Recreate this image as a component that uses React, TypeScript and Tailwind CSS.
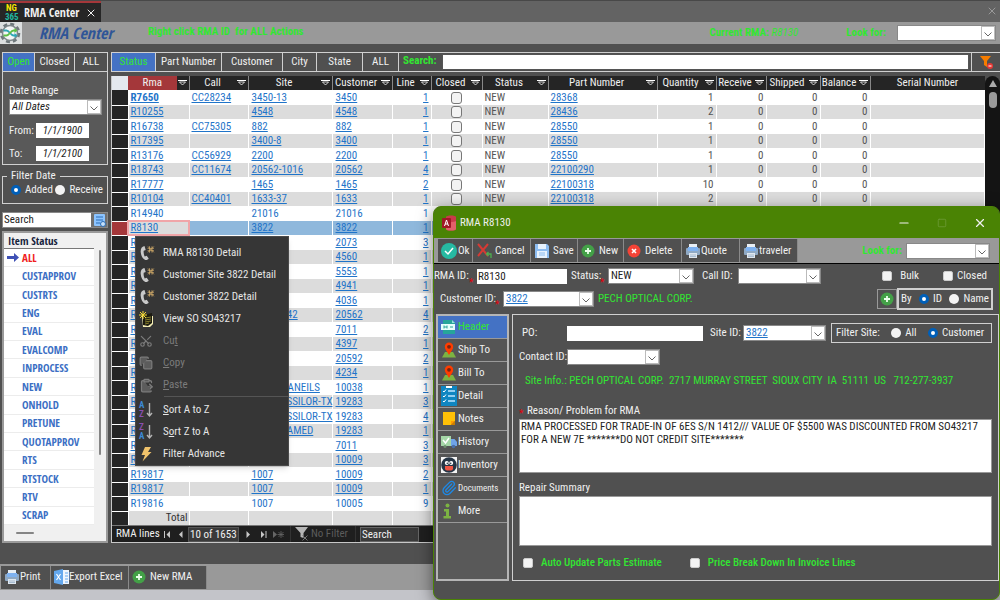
import { useState, type ReactNode } from 'react';
import { Scissors, Copy, ClipboardPaste, Paperclip, X, Minus, Square } from 'lucide-react';

type Row = { rma: string; call?: string; site?: string; customer: string; line: number; part?: string; qty?: number; plain?: boolean };

const rows: Row[] = [
    { rma: 'R7650', call: 'CC28234', site: '3450-13', customer: '3450', line: 1, part: '28368', qty: 1 },
    { rma: 'R10255', site: '4548', customer: '4548', line: 1, part: '28436', qty: 2 },
    { rma: 'R16738', call: 'CC75305', site: '882', customer: '882', line: 1, part: '28550', qty: 1 },
    { rma: 'R17395', site: '3400-8', customer: '3400', line: 1, part: '28550', qty: 1 },
    { rma: 'R13176', call: 'CC56929', site: '2200', customer: '2200', line: 1, part: '28550', qty: 1 },
    { rma: 'R18743', call: 'CC11674', site: '20562-1016', customer: '20562', line: 4, part: '22100290', qty: 1 },
    { rma: 'R17777', site: '1465', customer: '1465', line: 2, part: '22100318', qty: 10 },
    { rma: 'R10104', call: 'CC40401', site: '1633-37', customer: '1633', line: 1, part: '22100318', qty: 2 },
    { rma: 'R14940', site: '21016', customer: '21016', line: 1, plain: true },
    { rma: 'R8130', site: '3822', customer: '3822', line: 1 },
    { rma: 'R', customer: '2073', line: 3 },
    { rma: 'R', customer: '4560', line: 1 },
    { rma: 'R', customer: '5553', line: 1 },
    { rma: 'R', customer: '4941', line: 1 },
    { rma: 'R', customer: '4036', line: 1 },
    { rma: 'R', site: '20562-142', customer: '20562', line: 4 },
    { rma: 'R', customer: '7011', line: 2 },
    { rma: 'R', customer: '4397', line: 1 },
    { rma: 'R', customer: '20592', line: 2 },
    { rma: 'R', customer: '4234', line: 1 },
    { rma: 'R', site: '10038-DANEILS', customer: '10038', line: 1 },
    { rma: 'R', site: '1007 - ESSILOR-TX', customer: '19283', line: 3 },
    { rma: 'R', site: '1007 - ESSILOR-TX', customer: '19283', line: 4 },
    { rma: 'R', site: '1007 FRAMED', customer: '19283', line: 1 },
    { rma: 'R', customer: '7011', line: 3 },
    { rma: 'R', customer: '10009', line: 3 },
    { rma: 'R19817', site: '1007', customer: '10009', line: 2 },
    { rma: 'R19817', site: '1007', customer: '10009', line: 1 },
    { rma: 'R19816', site: '1007', customer: '10005', line: 9, plain: true },
];

const columns = [
    { name: 'Rma', width: 'w-[61px]' },
    { name: 'Call', width: 'w-[59px]' },
    { name: 'Site', width: 'w-[84px]' },
    { name: 'Customer', width: 'w-[60px]' },
    { name: 'Line', width: 'w-[39px]' },
    { name: 'Closed', width: 'w-[51px]' },
    { name: 'Status', width: 'w-[66px]' },
    { name: 'Part Number', width: 'w-[109px]' },
    { name: 'Quantity', width: 'w-[59px]' },
    { name: 'Receive', width: 'w-[50px]' },
    { name: 'Shipped', width: 'w-[54px]' },
    { name: 'Balance', width: 'w-[50px]' },
];

const statuses = ['ALL', 'CUSTAPPROV', 'CUSTRTS', 'ENG', 'EVAL', 'EVALCOMP', 'INPROCESS', 'NEW', 'ONHOLD', 'PRETUNE', 'QUOTAPPROV', 'RTS', 'RTSTOCK', 'RTV', 'SCRAP'];

/* ---------- icons ---------- */

function PrinterIcon() {
    return (
        <svg className="size-4 shrink-0" viewBox="0 0 16 16">
            <rect x="4" y="1" width="8" height="5" fill="#e8eef4" />
            <rect x="1" y="5" width="14" height="7" rx="1" fill="#8fa9c4" />
            <rect x="3" y="4" width="10" height="4" fill="#7fb2f0" />
            <rect x="4" y="10" width="8" height="5" fill="#dfe7ef" />
            <path d="M5 12h6M5 13.5h6" stroke="#8fa9c4" strokeWidth=".7" />
        </svg>
    );
}

function PlusIcon() {
    return (
        <svg className="size-[14px] shrink-0" viewBox="0 0 14 14">
            <circle cx="7" cy="7" r="6.5" fill="#43a047" />
            <path d="M7 4v6M4 7h6" stroke="#eaffea" strokeWidth="1.8" />
        </svg>
    );
}

function PinIcon() {
    return (
        <svg className="size-4 shrink-0" viewBox="0 0 16 16">
            <path d="M4 10h8l3 5.5H1z" fill="#7cb342" />
            <path d="M8 13C6 9.500 3.800 7.500 3.800 4.800a4.200 4.200 0 0 1 8.400 0C12.200 7.500 10 9.500 8 13z" fill="#ff3d00" />
            <circle cx="8" cy="4.800" r="1.900" fill="#7b2410" />
        </svg>
    );
}

function FilterArrow() {
    return (
        <svg className="w-[9px] h-[6px] shrink-0" viewBox="0 0 9 6">
            <path d="M0 .5h9" stroke="#fff" />
            <path d="M1.500 2h6L4.500 5z" fill="#1c1c1c" stroke="#fff" strokeWidth=".8" />
        </svg>
    );
}

function GearLogo() {
    return (
        <svg className="w-[22px] h-[22px] shrink-0 bg-[#dcdfe0]" viewBox="0 0 22 22">
            <circle cx="10" cy="11" r="8.800" fill="none" stroke="#6f787c" strokeWidth="3" strokeDasharray="3.900 3" />
            <circle cx="10" cy="11" r="7.500" fill="#f4f6f6" stroke="#7d868a" strokeWidth="1.500" />
            <path d="M3.500 8.500h3c3 0 4 5 7 5h2" fill="none" stroke="#2fa7b5" strokeWidth="1.800" />
            <path d="M3.500 13.500h3c3 0 4-5 7-5h2" fill="none" stroke="#5fbf45" strokeWidth="1.800" />
            <path d="M14.500 6l3 2.500-3 2.500z" fill="#5fbf45" />
            <path d="M14.500 11l3 2.500-3 2.500z" fill="#2fa7b5" />
        </svg>
    );
}

function PhoneIcon() {
    return (
        <svg className="size-4" viewBox="0 0 16 16">
            <path d="M5.500 1C2.500 1.500 1.500 4 1.700 7c.3 3.800 2 7 4.600 8 1.400.4 2.700-.2 3.400-1.400L7.700 10.700l-2 .7C4.700 9.600 4.500 7.500 4.700 5.700l2-.6z" fill="#c9c9c9" />
            <path d="M8.500 3.300h6.500M8.500 5.700h6.500M10.500 1.200v6.500M13 1.200v6.500M9 1.500l5.800 5.800M14.800 1.500L9 7.300" stroke="#d9b06c" strokeWidth=".7" />
        </svg>
    );
}

function OrderIcon() {
    return (
        <svg className="size-4" viewBox="0 0 16 16">
            <path d="M3 5h11v8l-3 3H4z" fill="#f5efb5" />
            <path d="M4 4l9-2v10l-4 3-5-1z" fill="#1b1a10" />
            <path d="M6 7l6-1M6 9l6-1M6 11l6-1M6 13l4-1" stroke="#a59a33" strokeWidth=".8" />
            <path d="M4 0v8M0 4h8M1 1l6 6M7 1L1 7" stroke="#f4d936" strokeWidth="1" />
        </svg>
    );
}

function SortIcon({ reverse }: { reverse?: boolean }) {
    return (
        <span className="flex items-center text-[9px] leading-[9px] font-bold">
            <span className="flex flex-col w-[7px]">
                <span className={reverse ? 'text-[#8b4fb0]' : 'text-[#3c8ad6]'}>{reverse ? 'Z' : 'A'}</span>
                <span className={reverse ? 'text-[#3c8ad6]' : 'text-[#8b4fb0]'}>{reverse ? 'A' : 'Z'}</span>
            </span>
            <svg className="w-[7px] h-[15px]" viewBox="0 0 7 15">
                <path d="M3.500 0v13M1 10l2.500 3L6 10" fill="none" stroke="#b5b5b5" strokeWidth="1.400" />
            </svg>
        </span>
    );
}

function BoltIcon() {
    return (
        <svg className="size-4" viewBox="0 0 16 16">
            <path d="M6 1h6L9 6h3.500L3.500 15.500 6 9H2.500z" fill="#f0c36b" />
        </svg>
    );
}

/* ---------- form parts ---------- */

function Drop({ id, value, options, className, link }: { id: string; value?: string; options?: string[]; className: string; link?: boolean }) {
    return (
        <div className={`grid h-4 border border-[#888] bg-white ${className}`}>
            <select
                id={id}
                defaultValue={value}
                className={`[grid-area:1/1] appearance-none w-full min-w-0 bg-white pl-[2px] pr-4 leading-[14px] outline-none ${link ? 'text-[#1f74c9] underline' : 'text-[#222]'}`}
            >
                {(options ?? [value ?? '']).map((o) => (
                    <option key={o} value={o}>{o}</option>
                ))}
            </select>
            <span className="[grid-area:1/1] justify-self-end pointer-events-none w-[14px] bg-white border border-[#bbb] flex items-center justify-center">
                <svg className="w-2 h-[5px] mt-[3px]" viewBox="0 0 8 5">
                    <path d="M.5.500L4 4 7.500.500" fill="none" stroke="#666" />
                </svg>
            </span>
        </div>
    );
}

function Radio({ name, label, checked }: { name: string; label: string; checked?: boolean }) {
    return (
        <label className="flex items-center gap-1 whitespace-nowrap">
            <input
                type="radio"
                name={name}
                defaultChecked={checked}
                className="appearance-none size-[10px] shrink-0 rounded-full bg-[#f3f3f3] checked:border-[3px] checked:border-[#005fb8] checked:bg-white"
            />
            {label}
        </label>
    );
}

function Check({ label, className }: { label: string; className: string }) {
    return (
        <label className={`flex items-center whitespace-nowrap ${className}`}>
            <input type="checkbox" className="appearance-none size-[10px] shrink-0 rounded-[2px] bg-[#f3f3f3] border border-[#ccc] checked:bg-[#005fb8]" />
            {label}
        </label>
    );
}

function Required() {
    return <span className="w-2 shrink-0 self-end text-red-600 text-[10px] leading-[10px]">*</span>;
}

function ToolButton({ icon, children, className = '' }: { icon: ReactNode; children: ReactNode; className?: string }) {
    return (
        <button className={`h-[23px] flex items-center border-r border-[#8a8a8a] bg-[#505050] px-[3px] whitespace-nowrap ${className}`}>
            {icon}
            {children}
        </button>
    );
}

/* ---------- left side ---------- */

function Sidebar() {
    const [active, setActive] = useState('ALL');
    const [tab, setTab] = useState('Open');

    return (
        <aside className="w-[108px] shrink-0 flex flex-col pl-[2px]">
            <section className="border border-[#d0d0d0] bg-[#595959] h-[113px]">
                <div className="flex h-[19px] border-b border-[#d0d0d0]">
                    {['Open', 'Closed', 'ALL'].map((t) => (
                        <button
                            key={t}
                            onClick={() => setTab(t)}
                            className={`border-r border-[#d0d0d0] last:border-r-0 ${t === 'Closed' ? 'w-10' : 'w-[33px]'} ${tab === t ? 'bg-[#4472c4] text-[#32e632]' : 'bg-[#505050]'}`}
                        >
                            {t}
                        </button>
                    ))}
                </div>
                <div className="pl-[6px] pt-3">
                    <label htmlFor="range" className="block leading-[14px]">Date Range</label>
                    <Drop id="range" value="All Dates" options={['All Dates', 'This Month', 'This Year']} className="w-[93px] italic mt-[1px]" />
                    <div className="flex items-center mt-2">
                        <label htmlFor="from" className="w-[27px]">From:</label>
                        <input id="from" defaultValue="1/1/1900" className="w-[53px] h-[15px] bg-white text-[#222] italic text-center" />
                    </div>
                    <div className="flex items-center mt-2">
                        <label htmlFor="to" className="w-[27px]">To:</label>
                        <input id="to" defaultValue="1/1/2100" className="w-[53px] h-[15px] bg-white text-[#222] italic text-center" />
                    </div>
                </div>
            </section>

            <fieldset className="mt-1 h-[35px] border border-[#d0d0d0] px-2 pb-[6px]">
                <legend className="px-1 leading-[14px] -ml-1">Filter Date</legend>
                <div className="flex justify-between -mr-1">
                    <Radio name="filterdate" label="Added" checked />
                    <Radio name="filterdate" label="Receive" />
                </div>
            </fieldset>

            <div className="mt-2 flex h-4 border border-[#888]">
                <input aria-label="Search status" defaultValue="Search" className="min-w-0 flex-1 bg-white text-[#222] px-[1px]" />
                <button aria-label="Find" className="w-4 bg-[#707070] flex items-center justify-center">
                    <svg className="size-[13px]" viewBox="0 0 13 13">
                        <rect x="1" y="0" width="11" height="12" rx="1" fill="#8cc4ff" />
                        <path d="M3 3h7M3 6h7M3 9h4" stroke="#2b6cb5" />
                        <circle cx="10" cy="10" r="2.500" fill="#c5e0fa" stroke="#2b6cb5" />
                    </svg>
                </button>
            </div>

            <section className="mt-[3px] flex-1 border-2 border-[#9a9a9a] bg-[#f0f0f0] flex flex-col">
                <h2 className="mr-3 h-4 pl-1 font-['Open_Sans_Condensed','Open_Sans',sans-serif] font-bold leading-[16px] text-[#16233c] border-b border-[#777]">Item Status</h2>
                <div className="flex h-[276px]">
                    <ul className="flex-1 flex flex-col bg-white font-['Open_Sans_Condensed','Open_Sans',sans-serif] font-bold">
                        {statuses.map((s) => (
                            <li key={s} className="flex-1 border-b border-[#ececec] flex">
                                <button onClick={() => setActive(s)} className={`flex flex-1 items-center ${active === s ? 'text-[#f02020]' : 'text-[#3c6fc4]'}`}>
                                    <span className="w-[18px] pl-[3px]">
                                        {active === s && (
                                            <svg className="w-3 h-[9px]" viewBox="0 0 12 9">
                                                <path d="M0 3h7V0l5 4.500L7 9V6H0z" fill="#3f51b5" />
                                            </svg>
                                        )}
                                    </span>
                                    {s}
                                </button>
                            </li>
                        ))}
                    </ul>
                    <div className="w-3 flex justify-center pt-[1px]">
                        <div className="w-[2px] h-[205px] rounded bg-[#858585]" />
                    </div>
                </div>
                <div className="flex-1 flex items-center pl-3">
                    <div className="w-[18px] h-[2px] rounded bg-[#858585]" />
                </div>
            </section>
        </aside>
    );
}

/* ---------- grid ---------- */

function Link({ children, plain }: { children: ReactNode; plain?: boolean }) {
    return <a href="#" className={`text-[#1f74c9] ${plain ? '' : 'underline'}`}>{children}</a>;
}

function Grid() {
    return (
        <div className="flex flex-1">
            <table className="table-fixed flex-1 w-full border-collapse whitespace-nowrap self-start">
                <colgroup>
                    <col className="w-4" />
                    {columns.map((c) => <col key={c.name} className={c.width} />)}
                    <col />
                </colgroup>
                <thead>
                    <tr className="h-[14px] bg-[#252525] leading-[14px]">
                        <th className="bg-[#e4e8ee] p-0" />
                        {columns.map((c) => (
                            <th key={c.name} className="p-0 font-normal border-r border-[#888]">
                                <span className="flex items-center">
                                    <span className={`flex-1 ${c.name === 'Rma' ? 'bg-[#a4373a]' : ''}`}>{c.name}</span>
                                    <span className="w-3 flex justify-center"><FilterArrow /></span>
                                </span>
                            </th>
                        ))}
                        <th className="p-0 font-normal">Serial Number</th>
                    </tr>
                </thead>
                <tbody className="leading-[14px]">
                    {rows.map((r, i) => {
                        const current = r.rma === 'R8130';
                        return (
                            <tr key={i} className={`h-[14px] odd:h-[15px] [&>td]:p-0 [&>td]:border-r [&>td]:border-white ${current ? 'bg-[#8fb8dc]' : i % 2 ? 'bg-[#dcdcdc]' : 'bg-white'}`}>
                                <td className={`border-b border-b-[#aaa] ${current ? 'bg-[#a4373a]' : 'bg-[#252525]'}`} />
                                <td className={current ? 'bg-[#dcdcdc] outline outline-2 -outline-offset-1 outline-[#f0a5a8]' : ''}>
                                    <span className="pl-[2px]"><Link plain={r.plain}>{i === 0 ? <b>{r.rma}</b> : r.rma}</Link></span>
                                </td>
                                <td><span className="pl-[2px]">{r.call && <Link>{r.call}</Link>}</span></td>
                                <td><span className="pl-[3px]">{r.site && <Link plain={r.plain}>{r.site}</Link>}</span></td>
                                <td><span className="pl-[3px]"><Link plain={r.plain}>{r.customer}</Link></span></td>
                                <td className="text-right"><span className="pr-[2px]"><Link plain={r.plain}>{r.line}</Link></span></td>
                                <td>
                                    {r.part && <input type="checkbox" aria-label={`Closed ${r.rma}`} className="appearance-none block mx-auto w-[11px] h-3 rounded-[3px] border border-[#777] bg-[#f3f3f3]" />}
                                </td>
                                <td className="text-[#555]"><span className="pl-[2px]">{r.part && 'NEW'}</span></td>
                                <td><span className="pl-[2px]">{r.part && <Link>{r.part}</Link>}</span></td>
                                <td className="text-right text-[#555]"><span className="pr-[2px]">{r.qty}</span></td>
                                <td className="text-right text-[#555]"><span className="pr-[2px]">{r.part && 0}</span></td>
                                <td className="text-right text-[#555]"><span className="pr-[2px]">{r.part && 0}</span></td>
                                <td className="text-right text-[#555]"><span className="pr-[2px]">{r.part && 0}</span></td>
                                <td />
                            </tr>
                        );
                    })}
                    <tr className="h-[14px] bg-[#dcdcdc] text-[#333] [&>td]:p-0 [&>td]:border-r [&>td]:border-white">
                        <td className="bg-[#252525]" />
                        <td className="text-right"><span className="pr-[1px]">Total</span></td>
                        {columns.map((c) => <td key={c.name} />)}
                    </tr>
                </tbody>
            </table>
            <div className="w-[15px] shrink-0 bg-[#141414] rounded-t-lg flex flex-col items-center pt-1">
                <svg className="w-2 h-2" viewBox="0 0 8 8"><path d="M4 0l4 7H0z" fill="#aaa" /></svg>
                <div className="mt-1 w-2 h-4 rounded-full bg-[#9a9a9a]" />
            </div>
        </div>
    );
}

function NavBar() {
    const arrow = 'h-[9px] w-[9px] fill-[#c8c8c8]';
    return (
        <div className="h-[17px] bg-[#1f1f1f] flex items-center border-t border-[#777] pl-1 whitespace-nowrap">
            <span className="w-[43px]">RMA lines</span>
            <button aria-label="First" className="w-4 flex justify-center"><svg className={arrow} viewBox="0 0 9 9"><path d="M1 1h1v7H1zM7 1v7L3.500 4.500z" /></svg></button>
            <button aria-label="Previous" className="w-[11px] flex justify-center"><svg className={arrow} viewBox="0 0 9 9"><path d="M6.500 1v7L3 4.500z" /></svg></button>
            <input aria-label="Record" defaultValue="10 of 1653" className="w-[51px] h-[15px] ml-[2px] px-[1px] bg-[#3a3a3a] border border-[#555]" />
            <button aria-label="Next" className="w-[18px] flex justify-center"><svg className={arrow} viewBox="0 0 9 9"><path d="M2.500 1v7L6 4.500z" /></svg></button>
            <button aria-label="Last" className="w-[13px] flex justify-center"><svg className={arrow} viewBox="0 0 9 9"><path d="M6.500 1h1v7h-1zM2 1v7l3.500-3.500z" /></svg></button>
            <button aria-label="New record" className="w-4 flex justify-center">
                <svg className="h-[9px] w-[11px] fill-[#666]" viewBox="0 0 11 9"><path d="M0 1v7l4-3.500z" /><path d="M8 1v7M4.500 4.500h6.500M5.500 2l5 5M10.500 2l-5 5" stroke="#666" strokeWidth=".8" /></svg>
            </button>
            <button className="ml-1 w-[66px] flex items-center gap-[2px] text-[#5c5c5c] border-l border-r border-[#333] pl-1 h-full">
                <svg className="size-[14px]" viewBox="0 0 14 14"><path d="M0 0h13L8.500 6v5l-3-1V6z" fill="#b5b5b5" /><path d="M7.500 8.500l5 5M12.500 8.500l-5 5" stroke="#777" /></svg>
                No Filter
            </button>
            <input aria-label="Search records" defaultValue="Search" className="ml-1 w-[59px] h-[15px] px-[1px] bg-[#3a3a3a] border border-[#666]" />
        </div>
    );
}

/* ---------- context menu ---------- */

function Item({ icon, children, disabled }: { icon: ReactNode; children: ReactNode; disabled?: boolean }) {
    return (
        <button role="menuitem" disabled={disabled} className={`h-[22px] w-full flex items-center text-left whitespace-nowrap ${disabled ? 'text-[#7c7c7c]' : 'text-[#e6e6e6]'}`}>
            <span className="w-[27px] pl-[3px] flex shrink-0">{icon}</span>
            <span>{children}</span>
        </button>
    );
}

function ContextMenu() {
    return (
        <div role="menu" className="absolute left-[135px] top-[236px] w-[154px] bg-[#363636] border border-[#4a4a4a] pt-[5px] shadow-md">
            <Item icon={<PhoneIcon />}>RMA R8130 Detail</Item>
            <Item icon={<PhoneIcon />}>Customer Site 3822 Detail</Item>
            <Item icon={<PhoneIcon />}>Customer 3822 Detail</Item>
            <Item icon={<OrderIcon />}>View SO SO43217</Item>
            <Item disabled icon={<Scissors className="size-[14px] -rotate-90" strokeWidth={2} />}>Cu<u>t</u></Item>
            <Item disabled icon={<Copy className="size-[14px]" strokeWidth={2} fill="#5c5c5c" />}><u>C</u>opy</Item>
            <Item disabled icon={<ClipboardPaste className="size-[15px]" strokeWidth={2} fill="#5c5c5c" />}><u>P</u>aste</Item>
            <div className="ml-7 mb-[2px] border-t border-[#555]" />
            <Item icon={<SortIcon />}><u>S</u>ort A to Z</Item>
            <Item icon={<SortIcon reverse />}>S<u>o</u>rt Z to A</Item>
            <Item icon={<BoltIcon />}>Filter Advance</Item>
        </div>
    );
}

/* ---------- RMA window ---------- */

const sections: { name: string; icon: ReactNode }[] = [
    {
        name: 'Header',
        icon: (
            <svg className="size-4 shrink-0" viewBox="0 0 16 16">
                <path d="M2 1h9l3 3v11H2z" fill="#26a69a" />
                <path d="M11 1l3 3h-3z" fill="#8fe0d6" />
                <rect x="0" y="5" width="14" height="6" fill="#e6fffb" />
                <path d="M3 6.500v3M6 6.500v3M3 8h3M9 8h3" stroke="#26a69a" />
            </svg>
        ),
    },
    { name: 'Ship To', icon: <PinIcon /> },
    { name: 'Bill To', icon: <PinIcon /> },
    {
        name: 'Detail',
        icon: (
            <svg className="w-4 h-5 shrink-0" viewBox="0 0 16 20">
                <rect width="16" height="20" fill="#0f86c1" />
                <rect x="5" width="6" height="2" fill="#fff" />
                <path d="M7 5h7M7 10h7M7 15h7" stroke="#bfe6ff" strokeWidth="1.600" />
                <path d="M2 5l1 1 2-2.500M2 10l1 1 2-2.500M2 15l1 1 2-2.500" fill="none" stroke="#fff" />
            </svg>
        ),
    },
    {
        name: 'Notes',
        icon: (
            <svg className="size-4 shrink-0" viewBox="0 0 16 16">
                <path d="M2 1h12v9l-4 4H2z" fill="#ffc107" />
                <path d="M14 10l-4 4v-4z" fill="#ff9800" />
                <path d="M10 14l4-4v4z" fill="#c97d00" />
            </svg>
        ),
    },
    {
        name: 'History',
        icon: (
            <svg className="size-4 shrink-0" viewBox="0 0 16 16">
                <rect x="0" y="2" width="10" height="10" fill="#a5d6a7" />
                <path d="M2 6l2.500 3L8 4" fill="none" stroke="#fff" strokeWidth="1.500" />
                <path d="M10 5h3.500L16 8v4h-6z" fill="#6fa4e8" />
                <circle cx="12.500" cy="12.500" r="1.800" fill="#4a6fa5" />
                <circle cx="4" cy="12.500" r="1.500" fill="#6d8c6e" />
            </svg>
        ),
    },
    {
        name: 'Inventory',
        icon: (
            <svg className="size-4 shrink-0" viewBox="0 0 16 16">
                <rect width="16" height="16" fill="#f4f4f4" />
                <circle cx="8" cy="8" r="7.800" fill="#263545" />
                <circle cx="5.800" cy="6" r="2" fill="#fff" />
                <circle cx="10.200" cy="6" r="2" fill="#fff" />
                <circle cx="6.300" cy="6.200" r=".8" fill="#263545" />
                <circle cx="9.700" cy="6.200" r=".8" fill="#263545" />
                <path d="M4 9h8v2.500a2 2 0 0 1-2 2H6a2 2 0 0 1-2-2z" fill="#ee5544" />
            </svg>
        ),
    },
    { name: 'Documents', icon: <Paperclip className="size-4 shrink-0 text-[#1e88e5]" strokeWidth={2} /> },
    {
        name: 'More',
        icon: (
            <svg className="size-4 shrink-0" viewBox="0 0 16 16">
                <circle cx="6.500" cy="2.500" r="2" fill="#7cb342" />
                <path d="M3 6h5v7h2v2.500H2.500V13H5V8.500H3z" fill="#7cb342" />
            </svg>
        ),
    },
];

function RmaWindow() {
    const [section, setSection] = useState('Header');
    const [reason, setReason] = useState('RMA PROCESSED FOR TRADE-IN OF 6ES S/N 1412/// VALUE OF $5500 WAS DISCOUNTED FROM SO43217\nFOR A NEW 7E *******DO NOT CREDIT SITE*******');

    return (
        <div role="dialog" aria-label="RMA R8130" className="absolute right-0 top-[206px] w-[567px] min-h-[394px] rounded-lg border border-[#4a8304] bg-[#505050] overflow-hidden shadow-[0_4px_16px_rgba(0,0,0,.5)]">
            <div className="h-[31px] bg-[#4a8304] flex items-center pl-2">
                <svg className="w-[14px] h-4" viewBox="0 0 14 16">
                    <path d="M4 2c0-2 10-2 10 0v12c0 2-10 2-10 0z" fill="#c93a4a" />
                    <path d="M4 6c3 2 8 1 10 0v8c0 2-10 2-10 0z" fill="#e2606a" />
                    <rect y="3" width="9" height="10" rx="1" fill="#a01826" />
                    <path d="M2.500 11L4.500 5l2 6M3 9h3" fill="none" stroke="#fff" />
                </svg>
                <h1 className="ml-1">RMA R8130</h1>
                <div className="ml-auto flex gap-6 pr-3">
                    <button aria-label="Minimize"><Minus className="size-[14px]" strokeWidth={2} /></button>
                    <button aria-label="Maximize" disabled><Square className="size-[14px] p-[2px] text-[#6c9a35]" strokeWidth={2} /></button>
                    <button aria-label="Close"><X className="size-[14px]" strokeWidth={2} /></button>
                </div>
            </div>

            <div className="h-[26px] bg-[#999] border-b border-black flex items-center pl-1">
                <ToolButton className="w-[35px] gap-[1px]" icon={<svg className="size-4 shrink-0" viewBox="0 0 16 16"><circle cx="8" cy="8" r="8" fill="#26b9a2" /><path d="M4 8l3 3 5-6" fill="none" stroke="#fff" strokeWidth="1.500" /></svg>}>Ok</ToolButton>
                <ToolButton className="w-[58px] gap-[3px]" icon={<svg className="size-4 shrink-0" viewBox="0 0 16 16"><path d="M2 1l10 12M12 1L2 13" stroke="#d63a34" strokeWidth="2" /><path d="M15 15v-4h-4M12.500 9L10.500 11l2 2" fill="none" stroke="#4caf50" strokeWidth="1.300" /></svg>}>Cancel</ToolButton>
                <ToolButton className="w-[47px] gap-[3px]" icon={<svg className="size-4 shrink-0" viewBox="0 0 16 16"><path d="M1 1h12l2 2v12H1z" fill="#8cbcf0" /><rect x="4" y="1" width="8" height="5" fill="#e7f2fd" /><rect x="3" y="8" width="10" height="7" fill="#e7f2fd" /><path d="M5 10h6M5 12h6" stroke="#8cbcf0" /></svg>}>Save</ToolButton>
                <ToolButton className="w-[46px] gap-1" icon={<PlusIcon />}>New</ToolButton>
                <ToolButton className="w-[58px] gap-1" icon={<svg className="size-[14px] shrink-0" viewBox="0 0 14 14"><circle cx="7" cy="7" r="6.500" fill="#f44336" /><path d="M5 5l4 4M9 5l-4 4" stroke="#fff" strokeWidth="1.600" /></svg>}>Delete</ToolButton>
                <ToolButton className="w-[58px]" icon={<PrinterIcon />}>Quote</ToolButton>
                <ToolButton className="w-[58px]" icon={<PrinterIcon />}>traveler</ToolButton>
                <label htmlFor="win-look" className="ml-auto mr-1 font-bold text-[#32e632]">Look for:</label>
                <Drop id="win-look" className="w-[84px] mr-[9px]" />
            </div>

            <div className="flex items-center h-[24px] pr-3 whitespace-nowrap">
                <label htmlFor="rma-id" className="w-[35px]">RMA ID:</label>
                <Required />
                <input id="rma-id" defaultValue="R8130" className="w-[90px] h-[15px] bg-white text-[#222] px-[1px]" />
                <label htmlFor="status" className="w-[29px] ml-1">Status:</label>
                <Required />
                <Drop id="status" value="NEW" options={['NEW', 'ENG', 'EVAL', 'RTS']} className="w-[86px]" />
                <label htmlFor="call" className="w-[36px] ml-2">Call ID:</label>
                <Drop id="call" className="w-[83px]" />
                <div className="ml-auto flex gap-6">
                    <Check label="Bulk" className="gap-2" />
                    <Check label="Closed" className="gap-1" />
                </div>
            </div>
            <div className="flex items-center h-[22px] pl-[6px] pr-[6px] whitespace-nowrap">
                <label htmlFor="customer" className="w-[55px]">Customer ID:</label>
                <Required />
                <Drop id="customer" value="3822" link className="w-[91px]" />
                <span className="ml-1 text-[#32e632]">PECH OPTICAL CORP.</span>
                <button aria-label="Add customer" className="ml-auto size-5 border border-[#999] flex items-center justify-center"><PlusIcon /></button>
                <div className="h-[22px] w-24 border-2 border-[#d0d0d0] flex items-center justify-between px-[2px]">
                    By
                    <Radio name="by" label="ID" checked />
                    <Radio name="by" label="Name" />
                </div>
            </div>

            <div className="flex mt-1 gap-[3px] pl-[2px]">
                <nav className="w-[73px] shrink-0 border-2 border-[#b5b5b5] bg-[#595959]">
                    {sections.map((s) => (
                        <button
                            key={s.name}
                            onClick={() => setSection(s.name)}
                            className={`h-[23px] w-full flex items-center gap-[1px] pl-[3px] border-b border-[#999] ${section === s.name ? 'bg-[#4472c4] text-[#32e632]' : 'bg-[#555]'}`}
                        >
                            {s.icon}
                            <span className={s.name === 'Documents' ? 'text-[9px]' : ''}>{s.name}</span>
                        </button>
                    ))}
                </nav>

                <section className="flex-1 min-w-0 border border-[#d0d0d0] px-[6px] pt-2 pb-2">
                    <div className="flex items-center h-5 whitespace-nowrap">
                        <label htmlFor="po" className="w-[48px] pl-[3px]">PO:</label>
                        <input id="po" className="w-[136px] h-[15px] bg-white text-[#222]" />
                        <label htmlFor="site" className="w-[33px] ml-[7px]">Site ID:</label>
                        <Drop id="site" value="3822" link className="w-[83px]" />
                        <div className="ml-auto h-5 w-[161px] border border-[#d0d0d0] flex items-center justify-between pl-1 pr-[7px]">
                            Filter Site:
                            <Radio name="site" label="All" />
                            <Radio name="site" label="Customer" checked />
                        </div>
                    </div>
                    <div className="flex items-center mt-[6px]">
                        <label htmlFor="contact" className="w-[48px] whitespace-nowrap">Contact ID:</label>
                        <Drop id="contact" className="w-[93px]" />
                    </div>
                    <p className="mt-2 pl-[6px] leading-[16px] text-[#32e632] whitespace-pre">Site Info.: PECH OPTICAL CORP.  2717 MURRAY STREET  SIOUX CITY  IA  51111  US   712-277-3937</p>
                    <div className="mt-[14px] flex">
                        <Required />
                        <label htmlFor="reason" className="leading-[16px]">Reason/ Problem for RMA</label>
                    </div>
                    <textarea
                        id="reason"
                        value={reason}
                        onChange={(e) => setReason(e.target.value)}
                        className="block w-full h-[54px] resize-none bg-white border border-[#999] text-[#222] px-[1px] leading-[13px] outline-none"
                    />
                    <label htmlFor="repair" className="block mt-[7px] leading-[16px]">Repair Summary</label>
                    <textarea id="repair" className="block w-full h-[50px] resize-none bg-white border border-[#999] text-[#222] outline-none" />
                    <div className="flex gap-7 mt-2 pl-1 h-[18px] font-medium text-[#32e632]">
                        <Check label="Auto Update Parts Estimate" className="gap-2" />
                        <Check label="Price Break Down In Invoice Lines" className="gap-2" />
                    </div>
                </section>
            </div>
        </div>
    );
}

export default function App() {
    const [filter, setFilter] = useState('Status');
    const filters = [
        { name: 'Status', width: 'w-[44px]' },
        { name: 'Part Number', width: 'w-[66px]' },
        { name: 'Customer', width: 'w-[61px]' },
        { name: 'City', width: 'w-[34px]' },
        { name: 'State', width: 'w-[46px]' },
        { name: 'ALL', width: 'w-[36px]' },
    ];

    return (
        <div className="relative min-h-screen overflow-hidden flex flex-col bg-[#505050] text-[#f0f0f0] text-[11px] leading-[14px] font-['Roboto_Condensed','Open_Sans_Condensed',Roboto,sans-serif]">
            {/* Document tab */}
            <div className="h-[22px] bg-[#636363] flex items-start border-t border-[#484848]">
                <div className="h-[21px] w-[101px] bg-[#262626] border-t-2 border-[#a4373a] flex items-center pl-[5px] font-bold">
                    <span className="flex flex-col w-[13px] text-[9px] leading-[9px] text-center text-[#f5e400]">
                        NG<span className="text-[#1fb8a0]">365</span>
                    </span>
                    <span className="ml-[6px] font-['Open_Sans_Condensed','Open_Sans',sans-serif] text-[12px] whitespace-nowrap">RMA Center</span>
                    <button aria-label="Close tab" className="ml-auto mr-1"><X className="size-3" strokeWidth={2} /></button>
                </div>
                <button aria-label="Close all" className="ml-auto mt-1 mr-[2px]"><X className="size-3 text-[#999]" strokeWidth={2} /></button>
            </div>

            {/* Header */}
            <header className="h-[22px] bg-[#999] flex items-center">
                <GearLogo />
                <h1 className="ml-[17px] w-[73px] font-['Open_Sans_Condensed','Open_Sans',sans-serif] font-bold italic text-[16px] whitespace-nowrap text-[#2f5597]">RMA Center</h1>
                <p className="ml-9 mb-[2px] font-bold text-[#32e632] whitespace-pre">Right click RMA ID  for ALL Actions</p>
                <p className="ml-auto text-[#32e632]"><b>Current RMA:</b> <i>R8130</i></p>
                <label htmlFor="look" className="ml-12 mr-[11px] font-bold text-[#32e632]">Look for:</label>
                <Drop id="look" className="w-[99px] mr-1" />
            </header>

            <main className="flex-1 flex gap-[3px] pt-2 pb-[21px]">
                <Sidebar />
                <div className="flex-1 min-w-0 flex flex-col">
                    <div className="h-5 border border-r-0 border-[#d0d0d0] flex">
                        {filters.map((f) => (
                            <button
                                key={f.name}
                                onClick={() => setFilter(f.name)}
                                className={`shrink-0 border-r border-[#d0d0d0] whitespace-nowrap ${f.width} ${filter === f.name ? 'bg-[#4472c4] text-[#32e632]' : 'bg-[#505050]'}`}
                            >
                                {f.name}
                            </button>
                        ))}
                        <label htmlFor="search" className="w-[43px] pl-1 pt-[1px] font-bold text-[#32e632]">Search:</label>
                        <input id="search" className="flex-1 min-w-0 h-4 mt-[1px] bg-white text-[#222] border border-[#555]" />
                        <button aria-label="Clear filter" className="w-[29px] ml-[2px] flex items-center justify-center border-l border-[#d0d0d0]">
                            <svg className="w-[13px] h-[14px]" viewBox="0 0 13 14">
                                <path d="M0 1h11L7 6v6l-3-2V6z" fill="#f57c00" />
                                <circle cx="10" cy="11" r="3" fill="#e53935" />
                                <path d="M8.500 11h3" stroke="#fff" />
                            </svg>
                        </button>
                    </div>
                    <div className="mt-1 flex-1 flex flex-col border border-t-0 border-r-0 border-[#c8c8c8]">
                        <Grid />
                        <NavBar />
                    </div>
                </div>
            </main>

            <footer className="h-[26px] bg-[#999] flex items-center pl-[1px]">
                <ToolButton className="w-[50px]" icon={<PrinterIcon />}>Print</ToolButton>
                <ToolButton
                    className="w-[78px]"
                    icon={
                        <svg className="w-[15px] h-4 shrink-0" viewBox="0 0 15 16">
                            <rect x="5" y="1" width="10" height="14" fill="#eef5fd" />
                            <path d="M0 2l9-2v16l-9-2z" fill="#64a8ee" />
                            <path d="M2.500 5l4 6M6.500 5l-4 6" stroke="#fff" strokeWidth="1.200" />
                            <path d="M11 4h3M11 7h3M11 10h3M11 13h3" stroke="#64a8ee" />
                        </svg>
                    }
                >
                    Export Excel
                </ToolButton>
                <ToolButton className="w-[78px] gap-1" icon={<PlusIcon />}>New RMA</ToolButton>
            </footer>
            <div className="h-[11px] bg-[#c3c4c9]" />

            <ContextMenu />
            <RmaWindow />
        </div>
    );
}
